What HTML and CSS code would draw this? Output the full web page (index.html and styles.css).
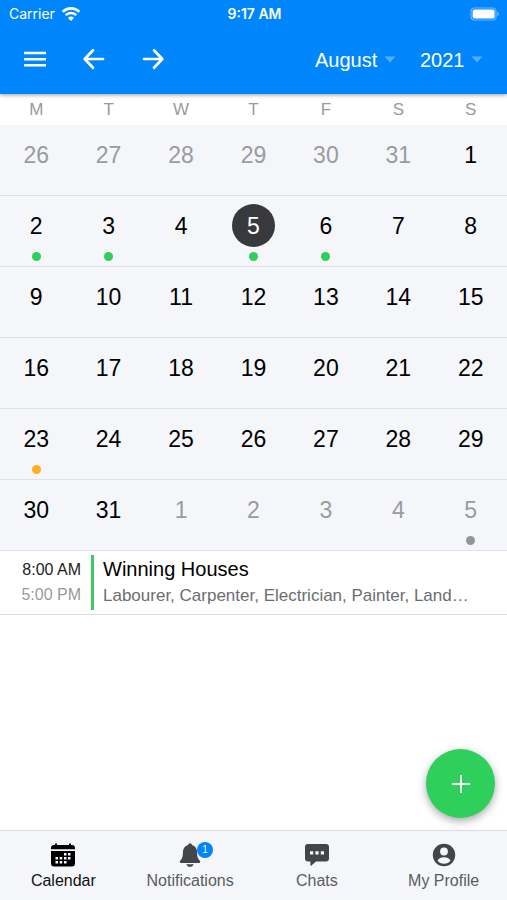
FILE: index.html
```html
<!DOCTYPE html>
<html lang="en">
<head>
<meta charset="utf-8">
<meta name="viewport" content="width=device-width, initial-scale=1">
<title>Calendar</title>
<link rel="stylesheet" href="styles.css">
</head>
<body>
<div class="app">
  <header class="header">
    <div class="status">
      <div class="carrier">
        <span>Carrier</span>
        <svg width="20" height="16" viewBox="0 0 20 16" fill="none" stroke="#fff" aria-hidden="true">
          <path d="M1.6 5.8a12 12 0 0 1 16.8 0" stroke-width="2.6"/>
          <path d="M4.7 9.2a7.5 7.5 0 0 1 10.6 0" stroke-width="2.4"/>
          <path d="M10 15l-3-3.1a4.3 4.3 0 0 1 6 0z" fill="#fff" stroke="none"/>
        </svg>
      </div>
      <time class="clock">9:17 AM</time>
      <svg class="battery" width="30" height="14" viewBox="0 0 30 14" aria-hidden="true">
        <rect x="1" y="1" width="25" height="12" rx="3.5" fill="none" stroke="#6fb8ff" stroke-width="1.2"/>
        <rect x="2.6" y="2.6" width="22" height="9" rx="2" fill="#fff"/>
        <path d="M27.3 4.8c2.2.7 2.2 3.700 0 4.400z" fill="#6fb8ff"/>
      </svg>
    </div>
    <nav class="toolbar" aria-label="Calendar controls">
      <button class="icon-button" type="button" aria-label="Menu">
        <svg width="24" height="24" viewBox="0 0 24 24" fill="none" stroke="#fff" stroke-width="2.5"><path d="M1 6h22M1 12.200h22M1 18.300h22"/></svg>
      </button>
      <button class="icon-button" type="button" aria-label="Previous month">
        <svg width="24" height="24" viewBox="0 0 24 24" fill="none" stroke="#fff" stroke-width="2.700" stroke-linecap="round" stroke-linejoin="round"><path d="M11 3.300L2.700 12l8.300 8.700M3 12h18"/></svg>
      </button>
      <button class="icon-button" type="button" aria-label="Next month">
        <svg width="24" height="24" viewBox="0 0 24 24" fill="none" stroke="#fff" stroke-width="2.700" stroke-linecap="round" stroke-linejoin="round"><path d="M13 3.300l8.300 8.700-8.300 8.700M21 12H3"/></svg>
      </button>
      <div class="pickers">
        <label class="picker picker-month">
          <select aria-label="Month">
            <option>January</option><option>February</option><option>March</option><option>April</option><option>May</option><option>June</option><option>July</option><option selected>August</option><option>September</option><option>October</option><option>November</option><option>December</option>
          </select>
          <svg width="12" height="7" viewBox="0 0 12 7" aria-hidden="true"><path d="M.5.500h11L6 6.500z" fill="#57adff"/></svg>
        </label>
        <label class="picker picker-year">
          <select aria-label="Year"><option>2020</option><option selected>2021</option><option>2022</option></select>
          <svg width="12" height="7" viewBox="0 0 12 7" aria-hidden="true"><path d="M.5.500h11L6 6.500z" fill="#57adff"/></svg>
        </label>
      </div>
    </nav>
  </header>

  <main class="main">
    <table class="calendar">
      <thead>
        <tr><th>M</th><th>T</th><th>W</th><th>T</th><th>F</th><th>S</th><th>S</th></tr>
      </thead>
      <tbody>
        <tr><td class="outside"><span class="day">26</span></td><td class="outside"><span class="day">27</span></td><td class="outside"><span class="day">28</span></td><td class="outside"><span class="day">29</span></td><td class="outside"><span class="day">30</span></td><td class="outside"><span class="day">31</span></td><td><span class="day">1</span></td></tr>
        <tr><td><span class="day">2</span><i class="dot green"></i></td><td><span class="day">3</span><i class="dot green"></i></td><td><span class="day">4</span></td><td><span class="day today">5</span><i class="dot green"></i></td><td><span class="day">6</span><i class="dot green"></i></td><td><span class="day">7</span></td><td><span class="day">8</span></td></tr>
        <tr><td><span class="day">9</span></td><td><span class="day">10</span></td><td><span class="day">11</span></td><td><span class="day">12</span></td><td><span class="day">13</span></td><td><span class="day">14</span></td><td><span class="day">15</span></td></tr>
        <tr><td><span class="day">16</span></td><td><span class="day">17</span></td><td><span class="day">18</span></td><td><span class="day">19</span></td><td><span class="day">20</span></td><td><span class="day">21</span></td><td><span class="day">22</span></td></tr>
        <tr><td><span class="day">23</span><i class="dot orange"></i></td><td><span class="day">24</span></td><td><span class="day">25</span></td><td><span class="day">26</span></td><td><span class="day">27</span></td><td><span class="day">28</span></td><td><span class="day">29</span></td></tr>
        <tr><td><span class="day">30</span></td><td><span class="day">31</span></td><td class="outside"><span class="day">1</span></td><td class="outside"><span class="day">2</span></td><td class="outside"><span class="day">3</span></td><td class="outside"><span class="day">4</span></td><td class="outside"><span class="day">5</span><i class="dot grey"></i></td></tr>
      </tbody>
    </table>

    <article class="event">
      <div class="times">
        <time class="start">8:00 AM</time>
        <time class="end">5:00 PM</time>
      </div>
      <div class="details">
        <h2 class="title">Winning Houses</h2>
        <p class="roles">Labourer, Carpenter, Electrician, Painter, Land…</p>
      </div>
    </article>

    <button class="add" type="button" aria-label="Add event">
      <svg width="20" height="20" viewBox="0 0 20 20" stroke="#fff" stroke-width="1.800" aria-hidden="true"><path d="M10 1v18M1 10h18"/></svg>
    </button>
  </main>

  <nav class="tabs" aria-label="Main">
    <a class="tab active" href="#calendar" aria-current="page">
      <svg width="26" height="26" viewBox="0 0 26 26" aria-hidden="true">
        <path d="M4 3h1V1.500h2V3h12V1.500h2V3h1q3 0 3 3v1.300H1V6q0-3 3-3zM1 9h24v12.500q0 3-3 3H4q-3 0-3-3z" fill="#000"/>
        <path d="M14 11h2.500v2.500H14zM18 11h2.500v2.500H18zM5.500 15H8v2.500H5.500zM9.700 15h2.500v2.500H9.700zM14 15h2.500v2.500H14zM18 15h2.500v2.500H18zM5.500 19H8v2.500H5.500zM9.700 19h2.500v2.500H9.700zM14 19h2.500v2.500H14z" fill="#f4f6fa"/>
      </svg>
      <span>Calendar</span>
    </a>
    <a class="tab" href="#notifications">
      <span class="bell">
        <svg width="26" height="26" viewBox="0 0 26 26" fill="#444547" aria-hidden="true">
          <path d="M13 1.300c1.200 0 1.800.8 1.900 1.700 3.500 1 5.200 3.800 5.200 7 0 5.500 1 7 2.600 8.500.9.900.7 2.500-.8 2.500H4.100c-1.500 0-1.700-1.600-.8-2.500C4.900 17 5.900 15.500 5.900 10c0-3.200 1.700-6 5.200-7 .1-.9.700-1.700 1.900-1.700zM9.300 22.200h7.400c-.6 1.600-1.900 2.600-3.700 2.600s-3.100-1-3.700-2.600z"/>
        </svg>
        <b class="badge">1</b>
      </span>
      <span>Notifications</span>
    </a>
    <a class="tab" href="#chats">
      <svg width="26" height="26" viewBox="0 0 26 26" aria-hidden="true">
        <path d="M4 2h18q3 0 3 3v11.500q0 3-3 3H12l-4.600 4.100q-1 .6-1-.6v-3.500H4q-3 0-3-3V5q0-3 3-3z" fill="#444547"/>
        <path d="M6 9.300h3.200v3.200H6zM11.400 9.300h3.200v3.200h-3.200zM16.800 9.300H20v3.200h-3.200z" fill="#f4f6fa"/>
      </svg>
      <span>Chats</span>
    </a>
    <a class="tab" href="#profile">
      <svg width="26" height="26" viewBox="0 0 26 26" aria-hidden="true">
        <circle cx="13" cy="13" r="11.200" fill="#444547"/>
        <circle cx="13" cy="9.500" r="3.900" fill="#f4f6fa"/>
        <path d="M6.500 18.500c1.300-2.300 3.700-3.200 6.500-3.200s5.200.9 6.500 3.200c-1.500 2.300-3.800 3.300-6.500 3.300s-5-1-6.500-3.300z" fill="#f4f6fa"/>
      </svg>
      <span>My Profile</span>
    </a>
  </nav>
</div>
</body>
</html>
```
FILE: styles.css
```css
* {
  box-sizing: border-box;
}

body {
  margin: 0;
  background: #fff;
  color: #000;
  font-family: "Liberation Sans", Arial, sans-serif;
}

button,
select {
  padding: 0;
  border: 0;
  background: none;
  color: inherit;
  font: inherit;
}

svg {
  display: block;
  flex: none;
}

.app {
  display: flex;
  flex-direction: column;
  min-height: 100vh;
}

/* Header */
.header {
  position: relative;
  padding-bottom: 10px;
  background: #0086fc;
  color: #fff;
  box-shadow: 0 1px 4px rgba(0, 0, 0, 0.4);
}

.status {
  display: grid;
  grid-template-columns: 1fr auto 1fr;
  align-items: center;
  height: 27px;
  padding: 0 7px 0 9px;
  font: 14px "Inter", sans-serif;
}

.carrier {
  display: flex;
  align-items: center;
  gap: 6px;
}

.clock {
  font-weight: 600;
}

.battery {
  justify-self: end;
}

.toolbar {
  display: flex;
  align-items: center;
  height: 57px;
  padding: 7px 24px 0 17px;
}

.icon-button {
  display: grid;
  place-items: center;
  width: 36px;
  height: 36px;
  margin-right: 23px;
}

.pickers {
  display: flex;
  gap: 24px;
  margin-left: auto;
  font-size: 20px;
}

.picker {
  display: grid;
  align-items: center;
}

.picker > * {
  grid-area: 1 / 1;
}

.picker svg {
  justify-self: end;
  pointer-events: none;
}

.picker select {
  width: 100%;
  height: 32px;
  padding-top: 2px;
  appearance: none;
}

.picker-month {
  width: 81px;
}

.picker-year {
  width: 63px;
}

/* Month grid */
.calendar {
  width: 100%;
  table-layout: fixed;
  border-collapse: collapse;
}

.calendar th {
  height: 31px;
  padding: 1px 0 0;
  color: #999a9c;
  font-size: 17px;
  font-weight: 400;
}

.calendar tbody {
  background: #f4f6fa;
}

.calendar td {
  height: 71px;
  padding: 8px 0 0;
  box-shadow: inset 0 -1px #dfe1e4;
  font-size: 23px;
  vertical-align: top;
}

.day {
  display: grid;
  place-items: center;
  width: 43px;
  height: 43px;
  margin: 0 auto;
  border-radius: 50%;
  line-height: 24px;
}

.outside {
  color: #9a9b9e;
}

.today {
  background: #38393c;
  color: #fff;
}

.dot {
  display: block;
  width: 9px;
  height: 9px;
  margin: 5px auto 0;
  border-radius: 50%;
}

.green {
  background: #2fcf5c;
}

.orange {
  background: #ffaf1c;
}

.grey {
  background: #949598;
}

/* Agenda */
.main {
  position: relative;
  flex: 1;
}

.event {
  display: flex;
  gap: 10px;
  padding: 4px 20px;
  border-bottom: 1px solid #dcdddf;
}

.times {
  display: flex;
  flex: none;
  flex-direction: column;
  gap: 5px;
  width: 61px;
  padding-top: 5px;
  font-size: 16px;
  line-height: 20px;
  text-align: right;
}

.start {
  color: #222;
}

.end {
  color: #999a9c;
}

.details {
  display: flex;
  flex: 1;
  flex-direction: column;
  gap: 3px;
  min-width: 0;
  padding: 2px 0 2px 9px;
  border-left: 3px solid #3cc864;
}

.title,
.roles {
  margin: 0;
  font-weight: 400;
  line-height: 24px;
}

.title {
  font-size: 20px;
}

.roles {
  overflow: hidden;
  color: #6c6d6f;
  font-size: 17px;
  text-overflow: ellipsis;
  white-space: nowrap;
}

.add {
  position: absolute;
  right: 12px;
  bottom: 12px;
  display: grid;
  place-items: center;
  width: 69px;
  height: 69px;
  border-radius: 50%;
  background: #2fcf5c;
  box-shadow: 0 3px 8px rgba(0, 0, 0, 0.35);
}

/* Tab bar */
.tabs {
  display: grid;
  grid-template-columns: repeat(4, 1fr);
  height: 70px;
  border-top: 1px solid #d9dbde;
  background: #f4f6fa;
}

.tab {
  display: flex;
  flex-direction: column;
  align-items: center;
  gap: 3px;
  padding-top: 11px;
  color: #5b5c5e;
  font-size: 16px;
  line-height: 20px;
  text-decoration: none;
}

.active {
  color: #111;
}

.bell {
  position: relative;
}

.badge {
  position: absolute;
  top: 0;
  left: 20px;
  width: 16px;
  height: 16px;
  border-radius: 50%;
  background: #0086fc;
  color: #fff;
  font-size: 10px;
  font-weight: 400;
  line-height: 16px;
  text-align: center;
}
```
